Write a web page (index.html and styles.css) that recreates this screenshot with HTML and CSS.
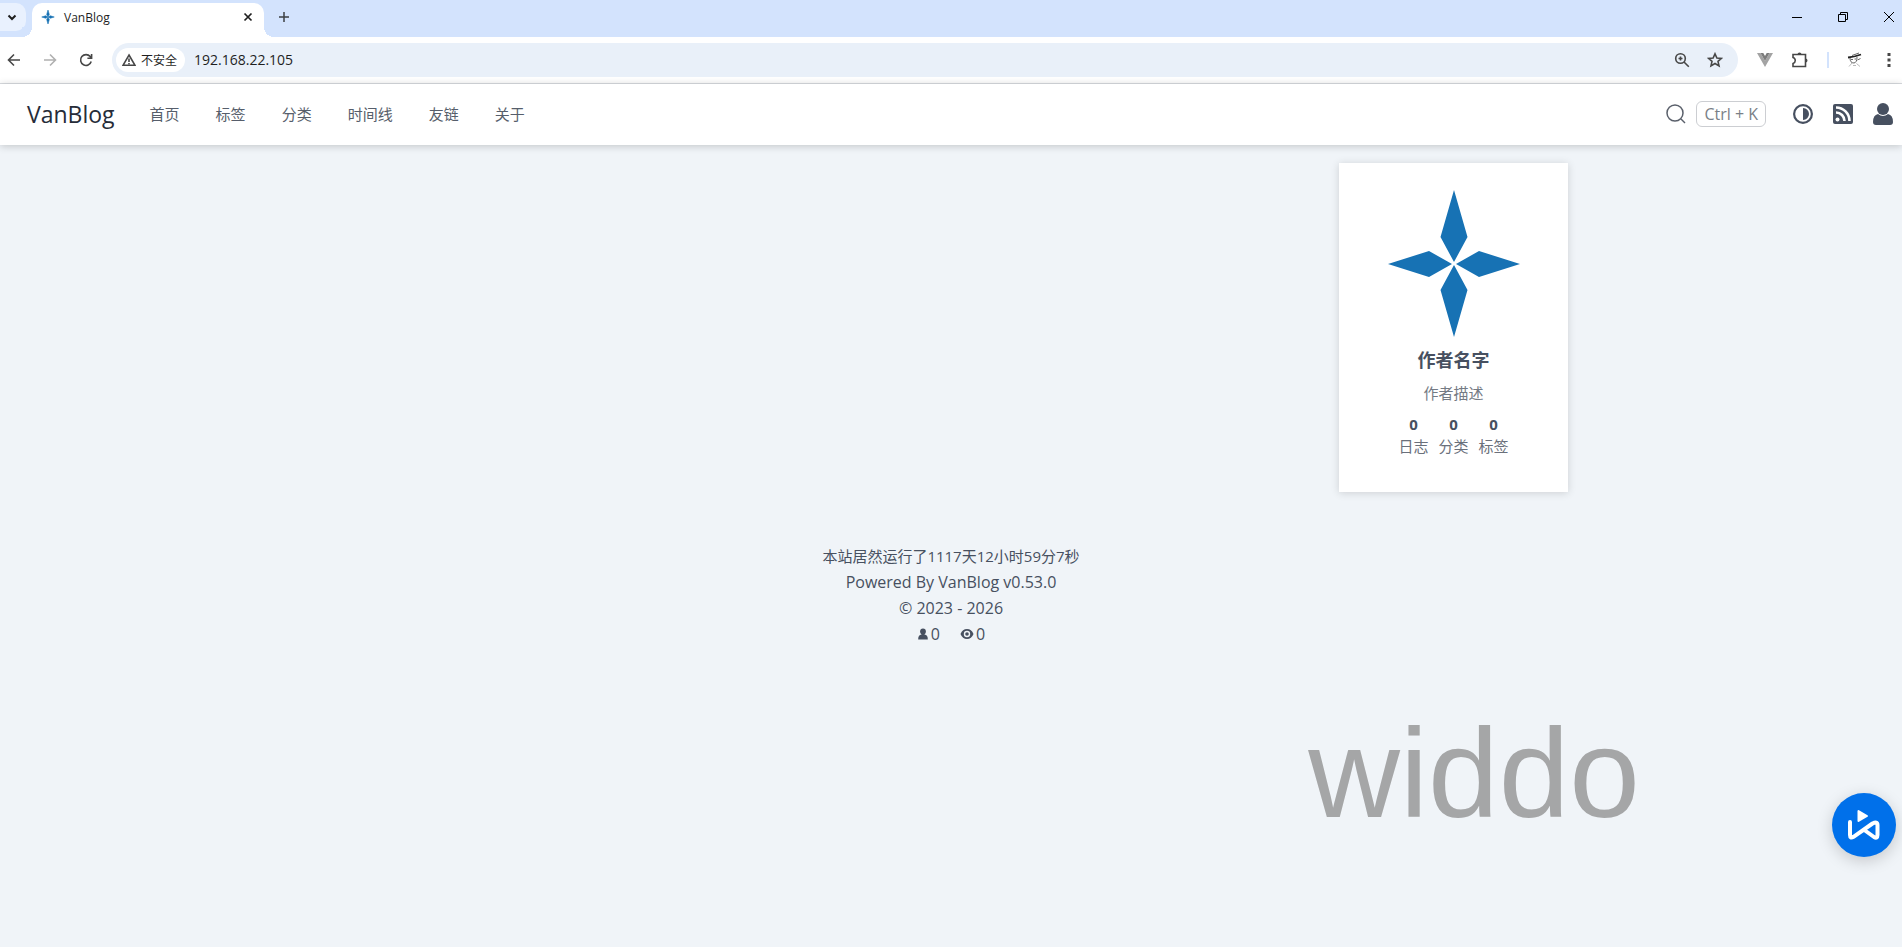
FILE: index.html
```html
<!DOCTYPE html>
<html lang="zh-CN">

<head>
    <meta charset="UTF-8" />
    <meta name="viewport" content="width=device-width, initial-scale=1.0" />
    <title>VanBlog</title>
    <link rel="stylesheet" href="styles.css">
</head>

<body>

    <!-- Browser tabs -->
    <div class="tab-strip">
        <button class="tab-search" aria-label="搜索标签页">
            <svg width="12" height="12" viewBox="0 0 12 12"><path d="M2.500 4.500L6 8l3.500-3.500" /></svg>
        </button>
        <div class="tab">
            <svg class="favicon" width="14" height="14" viewBox="0 0 132 148">
                <path d="M66 0L80 47L66 72L52 47zM66 76L80 101L66 148L52 101zM0 74L41 61L64 74L41 87zM132 74L91 61L68 74L91 87z" />
            </svg>
            <span class="tab-title">VanBlog</span>
            <button class="tab-close" aria-label="关闭">
                <svg width="12" height="12" viewBox="0 0 12 12"><path d="M2.500 2.500l7 7M9.500 2.500l-7 7" /></svg>
            </button>
        </div>
        <button class="tab-new" aria-label="打开新的标签页">
            <svg width="12" height="12" viewBox="0 0 12 12"><path d="M6 1v10M1 6h10" /></svg>
        </button>
        <div class="window-controls">
            <button aria-label="最小化"><svg width="12" height="12" viewBox="0 0 12 12"><path d="M1 6.500h10" /></svg></button>
            <button aria-label="还原"><svg width="12" height="12" viewBox="0 0 12 12"><path d="M1.500 3.500h7v7h-7zM3.500 3.500v-2h7v7h-2" /></svg></button>
            <button aria-label="关闭窗口"><svg width="12" height="12" viewBox="0 0 12 12"><path d="M1 1l10 10M11 1L1 11" /></svg></button>
        </div>
    </div>

    <!-- Address bar -->
    <div class="toolbar">
        <div class="toolbar-nav">
            <button aria-label="后退"><svg width="16" height="16" viewBox="0 0 16 16"><path d="M14 8H3M8 2.500L2.500 8L8 13.500" /></svg></button>
            <button class="disabled" aria-label="前进"><svg width="16" height="16" viewBox="0 0 16 16"><path d="M2 8h11M8 2.500L13.500 8L8 13.500" /></svg></button>
            <button aria-label="重新加载"><svg width="16" height="16" viewBox="0 0 16 16"><path d="M13.200 9.500A5.400 5.400 0 1 1 12.200 4.600L13.500 6M13.600 2v4.200H9.400" /></svg></button>
        </div>
        <div class="omnibox">
            <button class="security">
                <svg width="14" height="14" viewBox="0 0 14 14"><path d="M7 2L13 12.300H1zM7 5.500v3.500M7 10v1.300" /></svg>
                不安全
            </button>
            <input class="url" type="text" value="192.168.22.105" aria-label="地址栏">
            <button aria-label="缩放"><svg width="16" height="16" viewBox="0 0 16 16"><circle cx="6.500" cy="6.500" r="4.800" /><path d="M10 10l4.800 4.800M6.500 4.500v4M4.500 6.500h4" /></svg></button>
            <button aria-label="收藏"><svg width="16" height="16" viewBox="0 0 16 16"><path d="M8 1.800L9.900 6l4.500.4L11 9.400l1 4.500L8 11.500l-4 2.400 1-4.500L1.600 6.400 6.100 6z" /></svg></button>
        </div>
        <div class="extensions">
            <button aria-label="Vue"><svg class="vue" width="16" height="14" viewBox="0 0 16 14"><path d="M0 0h3.500L8 8l4.500-8H16L8 14z" /><path class="vue-inner" d="M3.500 0H6.300L8 3l1.700-3h2.800L8 8z" /></svg></button>
            <button aria-label="扩展程序"><svg width="18" height="18" viewBox="0 0 18 18"><path d="M2 3.500H14.500V15.500H2V12.500C5 11.500 5 7.500 2 6.500z" /><path class="solid" d="M6.500 3.500a2 2 0 0 1 4 0zM14.500 7.500a2 2 0 0 1 0 4z" /></svg></button>
            <span class="divider"></span>
            <button aria-label="个人资料"><svg class="profile" width="16" height="16" viewBox="0 0 16 16"><path class="hat" d="M1 5.500Q7 5 14 2.500" /><path d="M5 3.500L12 1M3 6Q3 11 7 11Q10 10.500 10 5M4 7.500h2M7.500 7h1.500M10.500 8l3-1.500" /><path class="faint" d="M5 11L2 14.500M9.500 11.500l3.500 3M6 13.500h3" /></svg></button>
            <button aria-label="菜单"><svg width="16" height="16" viewBox="0 0 16 16"><path class="solid" d="M6.500 1h3v3h-3zM6.500 6.500h3v3h-3zM6.500 12h3v3h-3z" /></svg></button>
        </div>
    </div>

    <!-- Site navigation -->
    <header class="site-header">
        <a class="logo" href="#">VanBlog</a>
        <nav class="site-nav">
            <a href="#">首页</a>
            <a href="#">标签</a>
            <a href="#">分类</a>
            <a href="#">时间线</a>
            <a href="#">友链</a>
            <a href="#">关于</a>
        </nav>
        <button class="search">
            <svg width="20" height="20" viewBox="0 0 20 20"><circle cx="9" cy="9" r="8" /><path d="M15 15l4 4" /></svg>
            <kbd>Ctrl + K</kbd>
        </button>
        <div class="site-tools">
            <button aria-label="切换主题">
                <svg width="22" height="22" viewBox="0 0 22 22"><path fill-rule="evenodd" d="M11 1a10 10 0 1 0 0 20a10 10 0 0 0 0-20zM11 3.200a7.800 7.800 0 1 1 0 15.600a7.800 7.800 0 0 1 0-15.600zM11 5a6 6 0 0 1 0 12z" /></svg>
            </button>
            <a href="#" aria-label="RSS">
                <svg width="22" height="22" viewBox="0 0 22 22"><rect x="1" y="1" width="20" height="20" rx="2" /><circle class="rss-dot" cx="5.500" cy="16.500" r="2" /><path class="rss-wave" d="M4 9.500A8.500 8.500 0 0 1 12.500 18M4 4.500A13.500 13.500 0 0 1 17.500 18" /></svg>
            </a>
            <a href="#" aria-label="登录">
                <svg width="22" height="24" viewBox="0 0 22 24"><circle cx="11" cy="7" r="6" /><path d="M6 12Q11 16 16 12Q21 13 21 20Q21 23 18 23H4Q1 23 1 20Q1 13 6 12z" /></svg>
            </a>
        </div>
    </header>

    <!-- Content: empty post list and author card -->
    <main class="container">
        <section class="posts"></section>
        <aside class="author-card">
            <svg class="author-logo" width="132" height="148" viewBox="0 0 132 148">
                <path d="M66 0L79.500 47L66 72L52.500 47zM66 75L79.500 100L66 147L52.500 100zM0 74L41 61L64 74L41 87zM132 74L91 61L68 74L91 87z" />
            </svg>
            <h2 class="author-name">作者名字</h2>
            <p class="author-desc">作者描述</p>
            <div class="stats">
                <a href="#"><strong>0</strong>日志</a>
                <a href="#"><strong>0</strong>分类</a>
                <a href="#"><strong>0</strong>标签</a>
            </div>
        </aside>
    </main>

    <footer class="site-footer">
        <p class="uptime">本站居然运行了1117天12小时59分7秒</p>
        <p>Powered By <a href="#">VanBlog v0.53.0</a></p>
        <p>© 2023 - 2026</p>
        <p class="visits">
            <span>
                <svg width="12" height="12" viewBox="0 0 12 12"><circle cx="6" cy="3.500" r="2.900" /><path d="M4.500 5h3v1.500Q11 7 10.800 11.500H1.200Q1 7 4.500 6.500z" /></svg>0
            </span>
            <span>
                <svg width="14" height="12" viewBox="0 0 14 12"><path fill-rule="evenodd" d="M7 1Q11.500 1 13.500 6Q11.500 11 7 11Q2.500 11 .5 6Q2.500 1 7 1zM7 2.800a3.200 3.200 0 1 0 0 6.400a3.200 3.200 0 0 0 0-6.400z" /><circle cx="7" cy="6" r="1.800" /></svg>0
            </span>
        </p>
    </footer>

    <!-- Watermark and floating button -->
    <div class="watermark">widdo</div>
    <button class="float-btn" aria-label="播放">
        <svg width="34" height="34" viewBox="0 0 34 34">
            <path class="play" d="M11.500 3v10l8.500-5z" />
            <path class="ribbon" d="M3 14V27Q3 31 6.500 28.800L25.500 15.500Q30.500 13 30.500 17V27Q30.500 31 27 29L18 22.500" />
        </svg>
    </button>

</body>

</html>
```
FILE: styles.css
```css
* {
    box-sizing: border-box;
}

body {
    margin: 0;
    min-height: 100vh;
    font-family: "Open Sans", "Noto Sans CJK SC", sans-serif;
    font-size: 15px;
    color: #475060;
    background: #f0f4f8;
}

a {
    color: inherit;
    text-decoration: none;
}

p,
h2 {
    margin: 0;
}

button {
    display: flex;
    align-items: center;
    justify-content: center;
    padding: 0;
    border: none;
    background: none;
    font: inherit;
    color: inherit;
    cursor: pointer;
}

svg {
    display: block;
    flex-shrink: 0;
}

/* Browser tabs */
.tab-strip {
    display: flex;
    height: 37px;
    padding: 3px 0 0;
    background: #d3e3fd;
}

.tab-strip svg {
    fill: none;
    stroke: #1f1f1f;
    stroke-width: 1.4;
}

.tab-search {
    width: 26px;
    height: 28px;
    border-radius: 0 10px 10px 0;
    background: #e9f1fe;
    padding-right: 2px;
}

.tab-search svg {
    stroke-width: 2;
}

.tab {
    position: relative;
    display: flex;
    align-items: center;
    width: 232px;
    height: 34px;
    margin-left: 6px;
    padding: 0 10px 6px 9px;
    border-radius: 10px 10px 0 0;
    background: #fff;
    font-size: 12px;
    color: #1f1f1f;
}

/* Curved feet of the tab */
.tab::before,
.tab::after {
    content: "";
    position: absolute;
    bottom: 0;
    width: 10px;
    height: 10px;
}

.tab::before {
    left: -10px;
    background: radial-gradient(circle at 0 0, #d3e3fd 10px, #fff 10px);
}

.tab::after {
    right: -10px;
    background: radial-gradient(circle at 100% 0, #d3e3fd 10px, #fff 10px);
}

.tab .favicon {
    fill: #1772b4;
    stroke: #1772b4;
    stroke-width: 6;
}

.tab-title {
    flex: 1;
    margin-left: 9px;
}

.tab-close svg {
    stroke-width: 1.7;
}

.tab-new {
    width: 24px;
    height: 28px;
    margin-left: 8px;
}

.tab-new svg {
    stroke: #3c4043;
    stroke-width: 1.5;
}

.window-controls {
    display: flex;
    gap: 20px;
    height: 28px;
    margin-left: auto;
}

.window-controls button {
    width: 26px;
}

.window-controls svg {
    stroke: #000;
    stroke-width: 1;
}

/* Address bar */
.toolbar {
    display: flex;
    align-items: center;
    height: 47px;
    padding: 0 5px 0 6px;
    border-bottom: 1px solid #dadde1;
    background: #fff;
}

.toolbar svg {
    fill: none;
    stroke: #474747;
    stroke-width: 1.6;
}

.toolbar .solid {
    fill: #474747;
    stroke: none;
}

.toolbar-nav {
    display: flex;
    gap: 20px;
    margin-right: 18px;
}

.toolbar-nav .disabled svg {
    stroke: #b0b0b0;
}

.omnibox {
    display: flex;
    flex: 1;
    align-items: center;
    gap: 17px;
    height: 34px;
    padding: 0 15px 0 4px;
    border-radius: 17px;
    background: #e9f0f9;
}

.security {
    gap: 5px;
    height: 24px;
    margin-right: -8px;
    padding: 0 8px 0 6px;
    border-radius: 12px;
    background: #fff;
    font-size: 12px;
    color: #1f1f1f;
}

.url {
    flex: 1;
    min-width: 0;
    padding: 0 0 2px;
    border: none;
    outline: none;
    background: none;
    font: inherit;
    font-size: 14px;
    color: #1f1f1f;
}

.extensions {
    display: flex;
    align-items: center;
    gap: 18px;
    margin-left: 19px;
}

.toolbar .vue {
    fill: #a3a3a3;
    stroke: none;
}

.vue-inner {
    fill: #7c7c7c;
}

.divider {
    width: 2px;
    height: 16px;
    background: #d3e3fd;
}

.toolbar .profile {
    stroke: #666;
    stroke-width: 1;
}

.profile .hat {
    stroke: #222;
    stroke-width: 1.8;
}

.profile .faint {
    stroke: #bbb;
}

/* Site navigation */
.site-header {
    display: flex;
    align-items: center;
    height: 61px;
    padding: 0 8px 2px 27px;
    background: #fff;
    box-shadow: 0 1px 8px rgba(0, 0, 0, 0.2);
}

.logo {
    font-size: 23px;
    color: #262c38;
}

.site-nav {
    display: flex;
    gap: 36px;
    margin-left: 35px;
    color: #565e6b;
}

.search {
    gap: 10px;
    margin-left: auto;
    color: #7a7f87;
}

.search svg {
    fill: none;
    stroke: #5a606b;
    stroke-width: 1.5;
}

kbd {
    height: 26px;
    padding: 0 7px;
    border: 1px solid #ccced2;
    border-radius: 6px;
    font-family: inherit;
    font-size: 16px;
    line-height: 24px;
}

.site-tools {
    display: flex;
    align-items: center;
    gap: 18px;
    margin-left: 26px;
}

.site-tools svg {
    fill: #475060;
}

.site-tools .rss-dot {
    fill: #fff;
}

.site-tools .rss-wave {
    fill: none;
    stroke: #fff;
    stroke-width: 2.6;
}

/* Content */
.container {
    display: flex;
    max-width: 1234px;
    margin: 18px auto 0;
}

.posts {
    flex: 1;
}

.author-card {
    display: flex;
    flex-direction: column;
    align-items: center;
    width: 229px;
    padding: 27px 0 35px;
    background: #fff;
    box-shadow: 0 1px 8px rgba(0, 0, 0, 0.15);
}

.author-logo {
    fill: #1772b4;
}

.author-name {
    margin-top: 9px;
    font-size: 18px;
    line-height: 26px;
}

.author-desc {
    margin-top: 8px;
    line-height: 24px;
    color: #747a84;
}

.stats {
    display: flex;
    gap: 10px;
    margin-top: 8px;
    line-height: 22px;
    text-align: center;
    color: #6a707b;
}

.stats strong {
    display: block;
    color: #475060;
}

/* Footer */
.site-footer {
    margin-top: 51px;
    font-size: 16px;
    line-height: 26px;
    text-align: center;
}

.uptime {
    font-size: 15px;
}

.visits {
    display: flex;
    justify-content: center;
    gap: 20px;
}

.visits span {
    display: flex;
    align-items: center;
    gap: 2px;
}

.visits svg {
    fill: #475060;
}

/* Watermark and floating button, above the page */
.watermark {
    position: fixed;
    right: 262px;
    bottom: 102px;
    font-family: "Liberation Sans", Arial, sans-serif;
    font-size: 127px;
    line-height: 144px;
    color: #a5a6a7;
}

.float-btn {
    position: fixed;
    right: 6px;
    bottom: 90px;
    width: 64px;
    height: 64px;
    border-radius: 50%;
    background: #0070ea;
    box-shadow: 0 4px 16px rgba(0, 0, 0, 0.18);
}

.play {
    fill: #fff;
    stroke: #fff;
    stroke-width: 2;
    stroke-linejoin: round;
}

.ribbon {
    fill: none;
    stroke: #fff;
    stroke-width: 4;
    stroke-linecap: round;
    stroke-linejoin: round;
}
```
